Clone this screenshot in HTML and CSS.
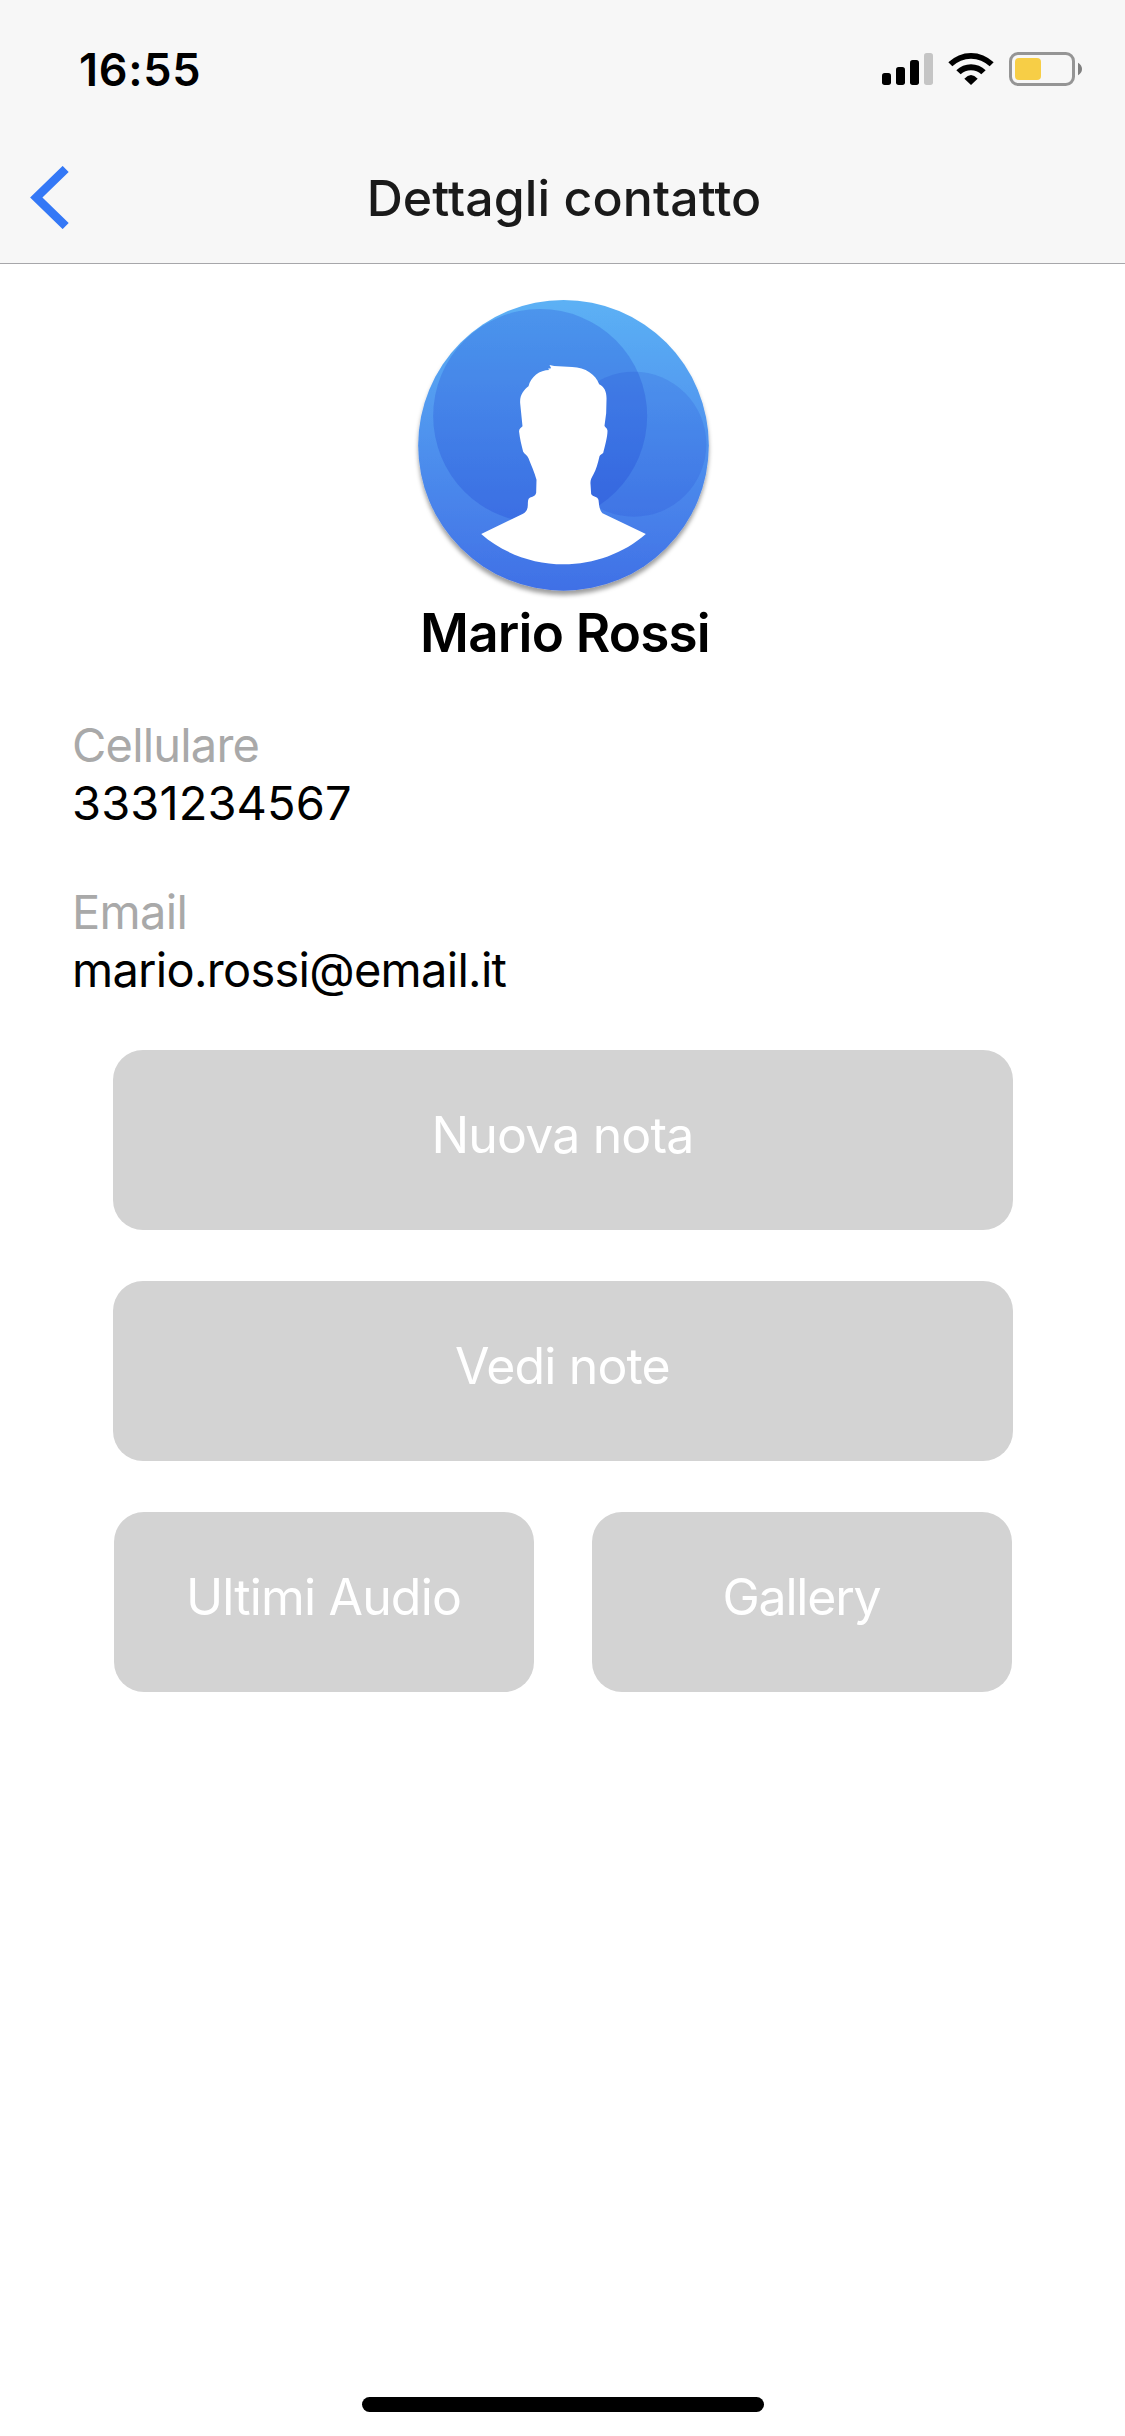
FILE: index.html
```html
<!DOCTYPE html>
<html lang="it">
<head>
  <meta charset="UTF-8" />
  <meta name="viewport" content="width=device-width, initial-scale=1" />
  <title>Dettagli contatto</title>
  <link rel="stylesheet" href="styles.css">
</head>
<body>
  <header class="header">
    <div class="status-bar">
      <span class="time">16:55</span>
      <svg class="status-icons" viewBox="0 0 795 234">
        <!-- signal -->
        <rect x="66" y="129" width="27" height="36" rx="8"/>
        <rect x="108" y="111" width="27" height="54" rx="8"/>
        <rect x="150" y="90" width="27" height="75" rx="8"/>
        <rect x="192" y="69" width="27" height="96" rx="8" fill="#c5c5c5"/>
        <!-- wifi -->
        <path d="M265 97A97 97 0 0 1 401 97L389 109A80 80 0 0 0 277 109Z"/>
        <path d="M289 121A62 62 0 0 1 377 121L364 133A45 45 0 0 0 302 133Z"/>
        <path d="M313 146Q333 124 353 146L333 165Z"/>
        <!-- battery -->
        <rect x="451.500" y="70.500" width="189" height="93" rx="23" fill="none" stroke="#959595" stroke-width="9"/>
        <rect x="465" y="84" width="78" height="66" rx="12" fill="#f7ce46"/>
        <path d="M654 98Q666 105 666 117Q666 129 654 136Z" fill="#808080"/>
      </svg>
    </div>
    <nav class="nav">
      <a class="back" href="#" aria-label="Indietro">
        <svg viewBox="0 0 117 189"><path d="M107 9L19 94.500L107 180" fill="none" stroke="#3478f6" stroke-width="26"/></svg>
      </a>
      <h1 class="title">Dettagli contatto</h1>
    </nav>
  </header>

  <main>
    <section class="profile">
      <svg class="avatar" viewBox="-7.500 0 990 930">
        <defs>
          <linearGradient id="base" x1="0" y1="0" x2="0" y2="1">
            <stop offset="0" stop-color="#5cb1f5"/>
            <stop offset="1" stop-color="#4070e6"/>
          </linearGradient>
          <filter id="shadow" x="-10%" y="-10%" width="120%" height="120%">
            <feDropShadow dx="0" dy="13" stdDeviation="6" flood-color="#000" flood-opacity="0.38"/>
          </filter>
        </defs>
        <circle cx="489" cy="466" r="436" fill="url(#base)" filter="url(#shadow)"/>
        <circle cx="419" cy="378" r="321" fill="#0c24c8" opacity="0.19"/>
        <circle cx="700" cy="462.500" r="217.500" fill="#0c24c8" opacity="0.13"/>
        <path fill="#fff" d="M447 225L461 228L515 231C555 232 586 254 596 283C612 292 619 305 618 330L617 370L612 407C613 412 620 412 621 422C621 440 613 470 608 489C604 493 599 494 597 499C592 520 587 540 579 553C572 565 569 572 570 582L572 612C577 621 591 618 594 630C596 643 595 657 606 670L736 732C670 790 580 823 489 823C398 823 308 790 242 732L366 672C377 667 382 657 382 645C382 635 382 626 388 623C397 619 405 618 407 608L408 569C402 548 392 525 384 505C380 495 373 493 368 485C363 467 358 445 356 427C354 416 362 414 366 409L359 340C357 315 370 300 384 289C391 260 417 240 447 240L442 236L452 235Z"/>
      </svg>
      <h2 class="name">Mario Rossi</h2>
    </section>

    <dl class="fields">
      <div class="field">
        <dt>Cellulare</dt>
        <dd class="phone">3331234567</dd>
      </div>
      <div class="field">
        <dt class="label-email">Email</dt>
        <dd>mario.rossi@email.it</dd>
      </div>
    </dl>

    <div class="buttons">
      <button>Nuova nota</button>
      <button>Vedi note</button>
      <div class="button-row">
        <button>Ultimi Audio</button>
        <button class="gallery">Gallery</button>
      </div>
    </div>
  </main>

  <div class="home-indicator"></div>
</body>
</html>
```

FILE: styles.css
```css
* {
  box-sizing: border-box;
}
body {
  margin: 0;
  min-height: 2436px;
  display: flex;
  flex-direction: column;
  font-family: Inter, sans-serif;
  background: #fff;
  color: #000;
}
.header {
  height: 264px;
  background: #f7f7f7;
  border-bottom: 1px solid #a7a7aa;
}
.status-bar {
  height: 132px;
  padding: 6px 0 0 79px;
  display: flex;
  align-items: center;
  justify-content: space-between;
}
.time {
  font-size: 45px;
  font-weight: 600;
  letter-spacing: 0.7px;
}
.status-icons {
  width: 265px;
  height: 78px;
}
.nav {
  height: 131px;
  padding: 0 29px 0 30px;
  display: grid;
  grid-template-columns: 39px 1fr 39px;
  align-items: center;
}
.back svg {
  display: block;
  width: 39px;
  height: 63px;
}
.title {
  margin: 0;
  padding-left: 2px;
  font-size: 50px;
  font-weight: 500;
  letter-spacing: 0.08px;
  text-align: center;
  color: #1a1a1a;
}
.profile {
  padding-top: 26px;
  display: flex;
  flex-direction: column;
  align-items: center;
}
.avatar {
  width: 330px;
  height: 310px;
}
.name {
  margin: 2px 0 0;
  padding-left: 5px;
  font-size: 53px;
  line-height: 62px;
  font-weight: 600;
  letter-spacing: -0.8px;
}
.fields {
  margin: 52px 72px 51px;
  display: flex;
  flex-direction: column;
  gap: 51px;
  font-size: 47px;
  line-height: 58px;
  letter-spacing: -0.72px;
}
.field dt {
  color: #a9a9a9;
  letter-spacing: -0.8px;
}
.field .label-email {
  letter-spacing: -0.7px;
}
.field dd {
  margin: 0;
}
.field .phone {
  letter-spacing: 0.11px;
}
.buttons {
  width: 900px;
  margin: 0 auto;
  display: flex;
  flex-direction: column;
  gap: 51px;
}
.button-row {
  padding: 0 1px;
  display: grid;
  grid-template-columns: 1fr 1fr;
  gap: 58px;
}
button {
  height: 180px;
  padding: 0 0 10px;
  background: #d3d3d3;
  border: none;
  border-radius: 30px;
  color: #fff;
  font-family: inherit;
  font-size: 50px;
  letter-spacing: -0.85px;
  cursor: pointer;
}
.gallery {
  letter-spacing: -1.2px;
}
.home-indicator {
  width: 402px;
  height: 15px;
  margin: auto auto 24px;
  border-radius: 8px;
  background: #000;
}
```
